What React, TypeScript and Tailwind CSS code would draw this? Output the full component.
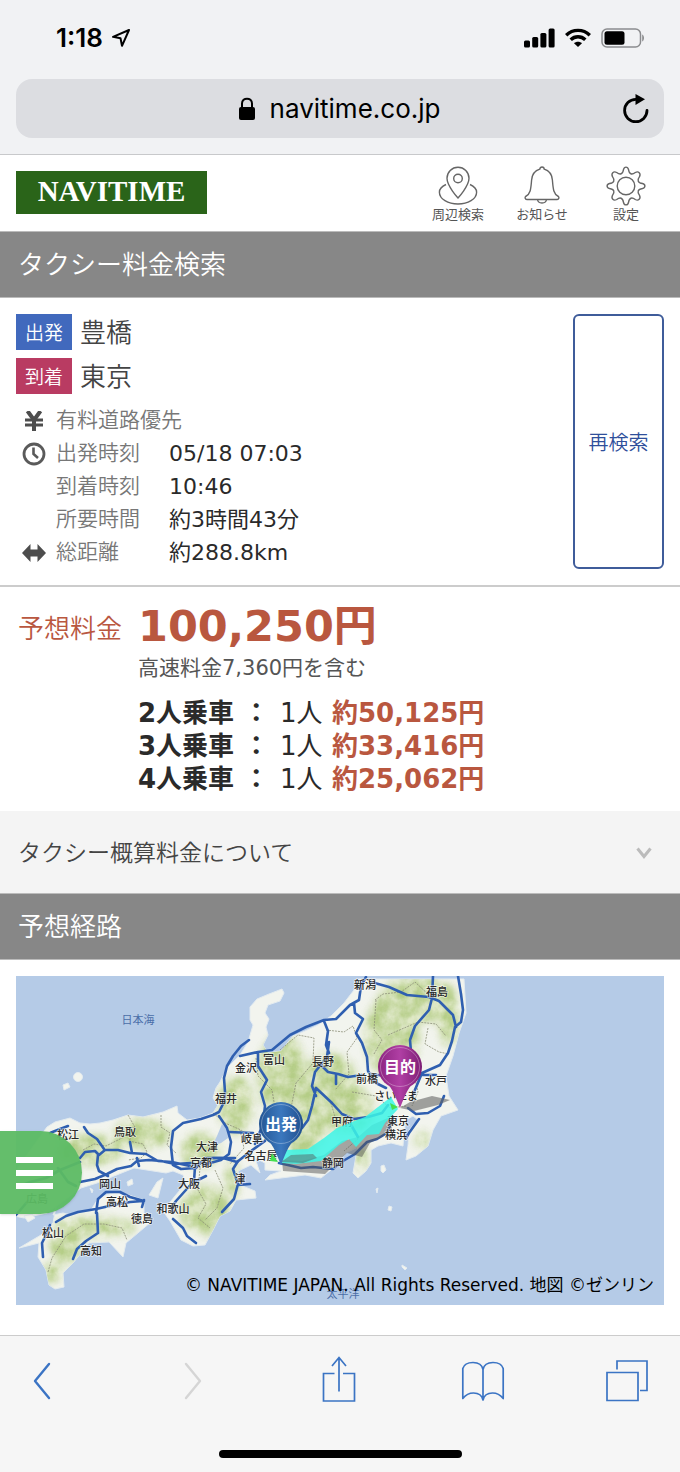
import type { ReactNode } from 'react';

interface IconProps {
  className?: string;
}

const LocationArrow = () => (
  <svg width="20" height="20" viewBox="0 0 20 20" fill="none" stroke="#000" strokeWidth="2" strokeLinejoin="round">
    <path d="M18 2 2 8.8l7.5 1.4L11 17.8Z" />
  </svg>
);

const StatusIcons = () => (
  <div className="flex items-center gap-[10px]">
    <svg width="31" height="20" viewBox="0 0 31 20">
      <rect x="0" y="12.5" width="6" height="7" rx="1.5" />
      <rect x="8.2" y="9" width="6" height="10.5" rx="1.5" />
      <rect x="16.4" y="5" width="6" height="14.5" rx="1.5" />
      <rect x="24.6" y="0.5" width="6" height="19" rx="1.5" />
    </svg>
    <svg width="26" height="20" viewBox="0 0 26 20" fill="none" stroke="#000" strokeWidth="3.4">
      <path d="M1.2 7.2C7.8.7 18.2.7 24.8 7.2" />
      <path d="M5.7 11.7c4.1-4 10.5-4 14.6 0" />
      <path d="M13 19 9 15.2c2.2-2 5.8-2 8 0Z" fill="#000" stroke="none" />
    </svg>
    <svg width="44" height="20" viewBox="0 0 44 20">
      <rect x="1" y="1" width="38.5" height="18" rx="5" fill="none" stroke="#8b8c8e" strokeWidth="1.5" />
      <rect x="3.5" y="3.2" width="20" height="13.6" rx="2.5" />
      <path d="M41.2 6.5c2.4 1.2 2.4 5.8 0 7Z" fill="#8b8c8e" />
    </svg>
  </div>
);

const LockIcon = () => (
  <svg width="18" height="24" viewBox="0 0 18 24">
    <rect x="1" y="10" width="16" height="13" rx="2" />
    <path d="M4 11V6.5C4 0 14 0 14 6.5V11" fill="none" stroke="#000" strokeWidth="2" />
  </svg>
);

const ReloadIcon = () => (
  <svg width="28" height="30" viewBox="0 0 28 30">
    <path d="M25 16.5A11.2 11.2 0 1 1 13.8 5.3" fill="none" stroke="#000" strokeWidth="2.8" strokeLinecap="round" />
    <path d="m13.5 0 9.5 5.3-9.5 5.6Z" />
  </svg>
);

const NearbyIcon = () => (
  <svg width="40" height="40" viewBox="0 0 40 40" fill="none" stroke="#666" strokeWidth="1.4">
    <path d="M20 32S9 20 9 12.3a11 11 0 0 1 22 0C31 20 20 32 20 32Z" />
    <circle cx="20" cy="12.5" r="4.3" />
    <path d="M8 18.5C4 20.3 1.4 23 1.4 26.2 1.4 33 10 38 20 38s18.6-5 18.6-11.8c0-3.2-2.6-5.9-6.6-7.7" />
  </svg>
);

const BellIcon = () => (
  <svg width="40" height="40" viewBox="0 0 40 40" fill="none" stroke="#666" strokeWidth="1.4" strokeLinejoin="round">
    <path d="M17.8 3.2c0-3 4.4-3 4.4 0C27.5 4.8 30 9 30.4 14c.7 8 .8 14 6 16.5.9.7.6 3-1.2 3H4.8c-1.8 0-2.1-2.3-1.2-3C8.8 28 8.9 22 9.6 14 10 9 12.5 4.8 17.8 3.2Z" />
    <path d="M15.5 33.5c.6 4.6 8.4 4.6 9 0" />
  </svg>
);

const GearIcon = () => (
  <svg width="40" height="40" viewBox="0 0 40 40" fill="none" stroke="#666" strokeWidth="1.4" strokeLinejoin="round">
    <circle cx="20" cy="20" r="8.8" />
    <path d="M17.5 3.5c.8-3.2 4.2-3.2 5 0 .7 4.7 3.3 5.6 6.8 3 3.2-1.7 5.8.8 4.2 4.2-2.6 3.5-1.7 6.1 3 6.8 3.2.8 3.2 4.2 0 5-4.7.7-5.6 3.3-3 6.8 1.6 3.4-1 5.9-4.2 4.2-3.5-2.6-6.1-1.7-6.8 3-.8 3.2-4.2 3.2-5 0-.7-4.7-3.3-5.6-6.8-3-3.2 1.7-5.8-.8-4.2-4.2 2.6-3.5 1.7-6.1-3-6.8-3.2-.8-3.2-4.2 0-5 4.7-.7 5.6-3.3 3-6.8-1.6-3.4 1-5.9 4.2-4.2 3.5 2.6 6.1 1.7 6.8-3Z" />
  </svg>
);

const YenIcon = () => (
  <svg width="20" height="20" viewBox="0 0 20 20" fill="none" stroke="#4d4d4d">
    <path d="M3.5 0 10 9l6.5-9M10 8v12" strokeWidth="4" />
    <path d="M1 9h18M1 14h18" strokeWidth="2.8" />
  </svg>
);

const ClockIcon = () => (
  <svg width="24" height="24" viewBox="0 0 24 24" fill="none" stroke="#5a5a5a">
    <circle cx="12" cy="12" r="10" strokeWidth="2.8" />
    <path d="M11.5 5.5V12l4.5 4" strokeWidth="2.6" />
  </svg>
);

const DistanceIcon = () => (
  <svg width="24" height="18" viewBox="0 0 24 18" fill="#4d4d4d">
    <path d="M0 9 8.5 0v5.5h7V0L24 9l-8.5 9v-5.5h-7V18Z" />
  </svg>
);

const ChevronDown = () => (
  <svg width="16" height="14" viewBox="0 0 16 14" fill="none" stroke="#bbb" strokeWidth="3">
    <path d="m1.5 2.5 6.5 8 6.5-8" />
  </svg>
);

const BackIcon = ({ className }: IconProps) => (
  <svg
    className={className}
    width="18"
    height="38"
    viewBox="0 0 18 38"
    fill="none"
    stroke="currentColor"
    strokeWidth="2.4"
    strokeLinejoin="round"
    strokeLinecap="round"
  >
    <path d="M16 2 2 19l14 17" />
  </svg>
);

const ShareIcon = () => (
  <svg width="34" height="50" viewBox="0 0 34 50" fill="none" stroke="currentColor" strokeWidth="1.7">
    <path d="M12.5 17.5h-11V45h31V17.5H21M17 1.5v34M10 10l7-8.5 7 8.5" />
  </svg>
);

const BookIcon = () => (
  <svg width="44" height="42" viewBox="0 0 44 42" fill="none" stroke="currentColor" strokeWidth="1.7" strokeLinejoin="round">
    <path d="M22 9.5c-1-5-5.5-7-10-7-4.8 0-9 2-10.2 6v30C4.5 35 8.500 33 12.500 33c5 0 8.500 2.500 9.500 7 1-4.500 4.500-7 9.500-7 4 0 8 2 10.700 5.500v-30c-1.200-4-5.400-6-10.200-6-4.500 0-9 2-10 7Zm0 0V40" />
  </svg>
);

const TabsIcon = () => (
  <svg width="42" height="42" viewBox="0 0 42 42" fill="none" stroke="currentColor" strokeWidth="1.7">
    <path d="M1 12.5h31v28H1zM11 9.5V1h30v29.5h-7" />
  </svg>
);

const HONSHU =
  'M16 1170 47 1127l8-5 15-4 10 5 10 1 10-1 13-3 15-5 15 2 20-5 14-6 1 7 9 7 13-2 13-5 5-8-5-7 3-10 4-6 7-14 13-13 8-13 5-17-3-5 0-13 7-8 12-5 13-5 2 4-4 8-12 4-3 8 4 6-3 8 2 8-5 10 5 8 13-2 12-15 12-5 13-6 13-9 13-13 10-13 5-11h105l2 34-7 20-6 23-7 20 3 20 9 14-17 6-8 14-5 16-12 10-10 4 2-14 1-16 9-10-5-4-7 4-2 13-1 13-12-3-13 3-7 4v13l-5 8-8 7-5-5 3-17 2-9-12 6-15 17-10 8-16-3-40 5 5-5 11-4-16-1 0-7-10-5 5 15-9-8-13 6 2 14 15 6 1 7-20 2-6 11-10 5-7 14-8 15-12 1-12-6-11-19-7-10 12-15 11-13-3-8-10-4-7 2-32-5-20 8-17 7-16 5-20 15-14 10-23 5-10-2Z';
const SHIKOKU =
  'm56 1207-3 8 10-2 8 2 20-5 8-13 17-5 13 3 15 5v13l7 9-25 21-3 14-14-15-20 1-16 20-10 10 1 14-9 2-6-4-3-15-8-13 1-14-20 5 22-13 12-12Z';
const ISLANDS =
  'm163 1178-3 12-2 8-9-3 8-13ZM63 1085l5-2 2 4-6 3ZM381 1166l3-1 2 5-3 3-2-2ZM376 1189l2-1-1 5ZM389 1206l3 1-1 4-3-1ZM402 1265l5 3-2 2-3-3ZM24 1216l8-2 3 4-7 4ZM127 1182l5-3 1 5-5 2ZM90 1188l3 2-1 3Z';

// green upland patches: cx, cy, rx, ry
const UPLANDS = [
  [90, 1150, 32, 14],
  [142, 1134, 28, 14],
  [200, 1150, 20, 16],
  [205, 1210, 24, 24],
  [236, 1105, 17, 28],
  [282, 1075, 24, 40],
  [300, 1120, 26, 36],
  [330, 1080, 26, 26],
  [347, 1110, 26, 24],
  [392, 1035, 26, 42],
  [417, 1000, 38, 22],
  [448, 1015, 10, 30],
  [361, 1158, 6, 12],
  [232, 1180, 6, 20],
  [422, 1140, 6, 8],
  [95, 1227, 40, 9],
  [66, 1245, 16, 18],
  [52, 1272, 9, 10],
];

const BORDERS = [
  'M128 1115l8 14-7 12 14 3 4 8-6 6-13 2M161 1115v12l9 6-3 12 9 8M83 1150l11-6 12 2 18-9M213 1113l12 10 16 7 17 12 8-3M256 1058l2 18 14 14 3 18 24 4M280 1050l18-15 16 3-1 25-17 20-6 30M326 1030l18 2 9-6 4 12-10 14 2 22-14 16',
  'M375 1000l8-6 18-2 14-10 15 14 14-2M376 1000l-2 30 8 10-8 14M388 1035l30-13 18 2 10 12M428 1028l-3 16 14 8 10 2M352 1092l24 4 14 12 16-2M330 1100l6 20 14 5 8 14-14 12M200 1168l-2 22 8 14-8 14 12 10M215 1170l8 18-6 20-12 12M48 1272l4-14 14-22 18-12 20 0 18 4 5 12M404 1062l10 12 4 18-6 14M240 1130l4 18-14 16',
];

const ROADS = [
  'M50 1133l10-4 8-3M84 1127l4 6 9 6 7 10M80 1158l5-6 10-1 4 4 6-5 13 0 12 3 16 1 12 7 14 1 18 4M98 1155l-1 10 2 6 9 5M80 1182l15-3 12-5 10-5 14-3 6-5 12-1 12 1 14 3 16-1M130 1142l2 11M137 1158l2 8',
  'M173 1165l-2-18 2-16 10-8 18-4 12-4 6-3 5-10 1-10-1-14 3-12 6-10 8-10 8-6M219 1116l8 12 4 14-2 12-8 6-18 5M173 1165l8 4 15-1 9-10 18 0 14 4 14-11 14-10',
  'M229 1132l24 1M195 1167l-1 14-9 10-9 10-5 7M172 1208l1 5M173 1219l10 9 4 8 9 7M193 1182l5-2 8-4M192 1163l4 2M222 1212l12-13 4-15-5-15 5-8M238 1185l12-1M213 1158l22 0',
  'M240 1056l18-4 14-2 18-15 16-8 18-7 12-1 14-14 9-5 2-14 5-9M324 1021l4 10-2 14 3 8M258 1052l0 14 9 14-6 12 4 14-2 18-8 20M329 1042l-2 15-12 15-3 14 4 10M316 1088l-4 18-4 14-6 8M316 1088l16 15 10 11 12 5 14-2 14-4 6-8M354 1003l1 10 8 6-7 14 6 10 5 14 1 14 8 12 10 5M336 1074v10M320 1064l8 8 10 2 10 3 14-2',
  'M371 982l18 5 18 8 22 2 10 4 14 14 3 12M458 976l3 18 2 16-2 12-6 5M433 976l-1 22-3 12-14 16-5 14 1 12 9 14M455 1027l-3 14-4 12-8 12-18 8-10 24M371 1074l15 2 18-4 14 3 18 0M408 1108l8 6 12-1 12-7 4-10M419 1119l-10 14-3 5M393 1118l-6 15-10 6-10 3-12 12-12 7-10 8-20-2-12 1-22-5M350 1123l8 14',
  'M56 1222l10-6 12-4 18-3 18-4 16-3 13-1M96 1213l2-14 8-7 14 0 10 5 14 4M144 1200l-2 7M97 1213l1 20-12 8-9 8-4 10M50 1225l-4 10-4 8 1 14',
  'M16 1188l14-6 16-4 14-8 20-8M58 1168l10 14 8 4M16 1215l12-14',
];

const PLACES: [string, number, number][] = [
  ['新潟', 365, 989],
  ['福島', 437, 996],
  ['金沢', 246, 1072],
  ['富山', 274, 1064],
  ['長野', 323, 1066],
  ['前橋', 367, 1083],
  ['水戸', 436, 1085],
  ['福井', 226, 1103],
  ['さいたま', 396, 1100],
  ['甲府', 342, 1126],
  ['東京', 398, 1125],
  ['横浜', 396, 1139],
  ['岐阜', 252, 1143],
  ['名古屋', 261, 1160],
  ['静岡', 333, 1167],
  ['津', 240, 1183],
  ['大津', 207, 1151],
  ['京都', 201, 1167],
  ['大阪', 189, 1188],
  ['和歌山', 173, 1213],
  ['松江', 68, 1139],
  ['鳥取', 125, 1136],
  ['岡山', 110, 1188],
  ['高松', 117, 1206],
  ['徳島', 142, 1223],
  ['松山', 53, 1237],
  ['高知', 91, 1255],
  ['広島', 37, 1203],
];

const Pin = ({ x, y, label, fill }: { x: number; y: number; label: string; fill: string }) => (
  <g transform={`translate(${x} ${y})`}>
    <path d="M-18 11C-8 20-6 26 0 41 6 26 8 20 18 11Z" fill={`url(#${fill})`} />
    <circle r="22" fill={`url(#${fill})`} />
    <circle r="19.5" fill="none" stroke="#fff" strokeOpacity=".3" strokeWidth="1" />
    <text y="6" textAnchor="middle" fontSize="16" fontWeight="700" fill="#fff">
      {label}
    </text>
  </g>
);

const RouteMap = () => (
  <svg
    viewBox="16 976 648 329"
    role="img"
    aria-label="予想経路の地図"
    className="block h-auto w-full font-['Noto_Sans_CJK_JP',sans-serif]"
  >
    <defs>
      <linearGradient id="pinStart" x1="0" x2="1">
        <stop offset="0" stopColor="#245593" />
        <stop offset=".5" stopColor="#3b78be" />
        <stop offset="1" stopColor="#1f4f8e" />
      </linearGradient>
      <linearGradient id="pinGoal" x1="0" x2="1">
        <stop offset="0" stopColor="#8b2480" />
        <stop offset=".5" stopColor="#b03fa4" />
        <stop offset="1" stopColor="#7d1d74" />
      </linearGradient>
      <filter id="soft" x="-10%" y="-10%" width="120%" height="120%">
        <feGaussianBlur stdDeviation="5" />
      </filter>
      <filter id="relief" x="-10%" y="-10%" width="120%" height="120%">
        <feGaussianBlur in="SourceGraphic" stdDeviation="4" result="area" />
        <feTurbulence type="fractalNoise" baseFrequency=".07" numOctaves="4" seed="4" />
        <feColorMatrix values="0 0 0 0 1  0 0 0 0 1  0 0 0 0 1  2 0 0 0 -.5" result="noise" />
        <feComposite in="area" in2="noise" operator="in" />
      </filter>
      <clipPath id="land">
        <path d={HONSHU} />
        <path d={SHIKOKU} />
      </clipPath>
    </defs>
    <rect x="16" y="976" width="648" height="329" fill="#b5cbe7" />
    <g fill="#f2f4ee" stroke="#e3ebf0" strokeWidth="1">
      <path d={HONSHU} />
      <path d={SHIKOKU} />
      <path d={ISLANDS} />
      <circle cx="78" cy="1077" r="4.5" />
    </g>
    <g clipPath="url(#land)">
      <g filter="url(#soft)" fill="#dbe6c0" opacity=".9">
        {UPLANDS.map(([cx, cy, rx, ry]) => (
          <ellipse key={`${cx}-${cy}`} cx={cx} cy={cy} rx={rx} ry={ry} />
        ))}
      </g>
      <g filter="url(#relief)" fill="#b0ca80" opacity=".9">
        {UPLANDS.map(([cx, cy, rx, ry]) => (
          <ellipse key={`${cx}-${cy}`} cx={cx} cy={cy} rx={rx} ry={ry} />
        ))}
      </g>
    </g>
    <path d="M222 1124l5 4 1 10-7 5-9 3 5-10Z" fill="#b5cbe7" />
    <g fill="none" stroke="#8d8f78" strokeWidth=".8" strokeDasharray="2 1">
      {BORDERS.map((d) => (
        <path key={d} d={d} />
      ))}
    </g>
    <g fill="none" stroke="#2f5fb0" strokeWidth="2.6" strokeLinejoin="round" strokeLinecap="round">
      {ROADS.map((d) => (
        <path key={d} d={d} />
      ))}
    </g>
    <path
      d="m282 1160 1 11 42 3 10-10 12-11 15 4 8-14 12-6 10-8-2-12-18 8-14 12-16 4-18 14-22 6Z"
      fill="#555"
      opacity=".5"
    />
    <path d="m400 1108 10-6 22-6 18 4-12 5-24 6Z" fill="#666" opacity=".6" />
    <g
      fontSize="11"
      fontWeight="500"
      fill="#2a2a2a"
      stroke="#fff"
      strokeWidth="1.5"
      strokeOpacity=".6"
      paintOrder="stroke"
      textAnchor="middle"
    >
      {PLACES.map(([name, x, y]) => (
        <text key={name} x={x} y={y}>
          {name}
        </text>
      ))}
    </g>
    <g fontSize="11" fill="#4a6ea8" textAnchor="middle">
      <text x="138" y="1024">日本海</text>
      <text x="343" y="1298">太平洋</text>
    </g>
    <path
      d="m285 1150 23-1 16-11 13-10 20-8 8-3 13-10 13-10 7 12-13 14-6 11-12 1-11 12-7-8-10 6-18 16-25 3-14-1Z"
      fill="#3cf5e6"
      opacity=".85"
    />
    <path d="M272 1153l6 9-8-1ZM390 1103l8 4-6 3Z" fill="#45e04f" />
    <path d="m281 1162 10-7 22-1 4 4-14 5Z" fill="#555" opacity=".45" />
    <Pin x={281} y={1124} label="出発" fill="pinStart" />
    <Pin x={400} y={1067} label="目的" fill="pinGoal" />
  </svg>
);

const HeaderLink = ({ label, children }: { label: string; children: ReactNode }) => (
  <a href="#" className="flex w-[84px] flex-col items-center gap-px text-[13px] leading-4 text-[#555]">
    {children}
    <span>{label}</span>
  </a>
);

const SectionTitle = ({ children }: { children: ReactNode }) => (
  <h2 className="flex h-[67px] items-center border-y border-[#bbb] bg-[#878787] px-[18px] pt-[2px] text-[26px] font-[350] text-white">
    {children}
  </h2>
);

const StationRow = ({ tag, tagClass, name }: { tag: string; tagClass: string; name: string }) => (
  <div className="flex h-9 items-center gap-2">
    <span className={`flex h-9 w-14 items-center justify-center pt-[2px] text-[19px] font-[350] text-white ${tagClass}`}>
      {tag}
    </span>
    <span className="pt-[2px] text-[26px] font-[350] text-[#444]">{name}</span>
  </div>
);

const DETAILS: { icon?: ReactNode; label: string; value?: string }[] = [
  { icon: <YenIcon />, label: '有料道路優先' },
  { icon: <ClockIcon />, label: '出発時刻', value: '05/18 07:03' },
  { label: '到着時刻', value: '10:46' },
  { label: '所要時間', value: '約3時間43分' },
  { icon: <DistanceIcon />, label: '総距離', value: '約288.8km' },
];

const FARES = [
  { party: '2人乗車', fare: '約50,125円' },
  { party: '3人乗車', fare: '約33,416円' },
  { party: '4人乗車', fare: '約25,062円' },
];

export default function App() {
  return (
    <div className="min-h-screen bg-white font-['DejaVu_Sans','Noto_Sans_CJK_JP',sans-serif] text-[#2a2a2a]">
      <header className="border-b border-[#c8c9cb] bg-[#f1f2f4] px-4 pb-4 font-['Inter',sans-serif] text-black">
        <div className="flex h-[79px] items-center justify-between pr-[19px] pb-1 pl-10">
          <div className="flex items-center gap-2">
            <span className="text-[26px] font-semibold">1:18</span>
            <LocationArrow />
          </div>
          <StatusIcons />
        </div>
        <div className="flex h-[59px] items-center rounded-2xl bg-[#dcdde1] pr-[14px] pl-10">
          <div className="flex flex-1 items-center justify-center gap-[14px]">
            <LockIcon />
            <span className="text-[26px]">navitime.co.jp</span>
          </div>
          <button type="button" aria-label="再読み込み">
            <ReloadIcon />
          </button>
        </div>
      </header>

      <div className="flex h-[76px] items-center justify-between pr-3 pb-[2px] pl-4">
        <a
          href="#"
          className="flex h-[43px] w-[191px] items-center justify-center bg-[#2a6419] font-['Liberation_Serif',serif] text-[29px] font-bold text-white"
        >
          NAVITIME
        </a>
        <nav className="flex pt-[5px]">
          <HeaderLink label="周辺検索">
            <NearbyIcon />
          </HeaderLink>
          <HeaderLink label="お知らせ">
            <BellIcon />
          </HeaderLink>
          <HeaderLink label="設定">
            <GearIcon />
          </HeaderLink>
        </nav>
      </div>

      <SectionTitle>タクシー料金検索</SectionTitle>

      <section className="flex justify-between border-b-2 border-[#ccc] p-4">
        <div>
          <div className="flex flex-col gap-2">
            <StationRow tag="出発" tagClass="bg-[#4169bd]" name="豊橋" />
            <StationRow tag="到着" tagClass="bg-[#b93b62]" name="東京" />
          </div>
          <dl className="mt-[10px] text-[21px] leading-[33px]">
            {DETAILS.map(({ icon, label, value }) => (
              <div key={label} className="flex h-[33px] items-center">
                <dt className="flex w-[153px] items-center font-[350] whitespace-nowrap text-[#777]">
                  <span className="flex w-10 shrink-0 justify-center pr-1">{icon}</span>
                  {label}
                </dt>
                {value && <dd className="text-[22px]">{value}</dd>}
              </div>
            ))}
          </dl>
        </div>
        <button
          type="button"
          className="w-[91px] rounded-md border-2 border-[#3f5c9a] pt-[2px] text-[20px] font-[350] text-[#2f4f9b]"
        >
          再検索
        </button>
      </section>

      <section className="flex px-[18px] pt-3 pb-[15px]">
        <h3 className="w-[120px] pt-3 text-[26px] leading-9 font-[350] text-[#b9573f]">予想料金</h3>
        <div>
          <p className="text-[43px] leading-[54px] font-bold text-[#b9573f]">100,250円</p>
          <p className="text-[21px] leading-[30px] text-[#555]">高速料金7,360円を含む</p>
          <ul className="mt-[14px] text-[26px] leading-[33px]">
            {FARES.map(({ party, fare }) => (
              <li key={party} className="flex">
                <span className="w-[142px] font-bold">{party} ：</span>
                <span className="w-[52px]">1人</span>
                <span className="font-bold text-[#b9573f]">{fare}</span>
              </li>
            ))}
          </ul>
        </div>
      </section>

      <button
        type="button"
        className="flex h-[82px] w-full items-center justify-between bg-[#f4f4f4] pt-[2px] pr-7 pl-[18px] text-[23px] font-[350] text-[#444]"
      >
        タクシー概算料金について
        <ChevronDown />
      </button>

      <SectionTitle>予想経路</SectionTitle>

      <section className="relative px-4 pt-4 pb-[30px]">
        <RouteMap />
        <p className="absolute right-[26px] bottom-[37px] text-[17px] text-black">
          © NAVITIME JAPAN. All Rights Reserved. 地図 ©ゼンリン
        </p>
        <button
          type="button"
          aria-label="メニュー"
          className="absolute top-[171px] left-0 flex h-[83px] w-[82px] flex-col justify-center gap-[7px] rounded-r-full bg-[#5cba63]/95 pl-4 shadow"
        >
          <span className="h-[6px] w-[37px] bg-white" />
          <span className="h-[6px] w-[37px] bg-white" />
          <span className="h-[6px] w-[37px] bg-white" />
        </button>
      </section>

      <footer className="border-t border-[#ccc] bg-[#f6f6f6] pb-[14px]">
        <nav className="flex h-[90px] items-center justify-between pr-[31px] pl-5 text-[#3b74c4]">
          <button type="button" aria-label="戻る" className="flex w-11 justify-center">
            <BackIcon />
          </button>
          <button type="button" aria-label="進む" disabled className="flex w-[52px] justify-end pr-[14px] text-[#d5d5d5]">
            <BackIcon className="rotate-180" />
          </button>
          <button type="button" aria-label="共有" className="flex w-11 justify-center">
            <ShareIcon />
          </button>
          <button type="button" aria-label="ブックマーク" className="flex w-11 justify-center">
            <BookIcon />
          </button>
          <button type="button" aria-label="タブ" className="flex w-11 justify-center">
            <TabsIcon />
          </button>
        </nav>
        <div className="mx-auto mt-6 h-2 w-[243px] rounded-full bg-black" />
      </footer>
    </div>
  );
}
